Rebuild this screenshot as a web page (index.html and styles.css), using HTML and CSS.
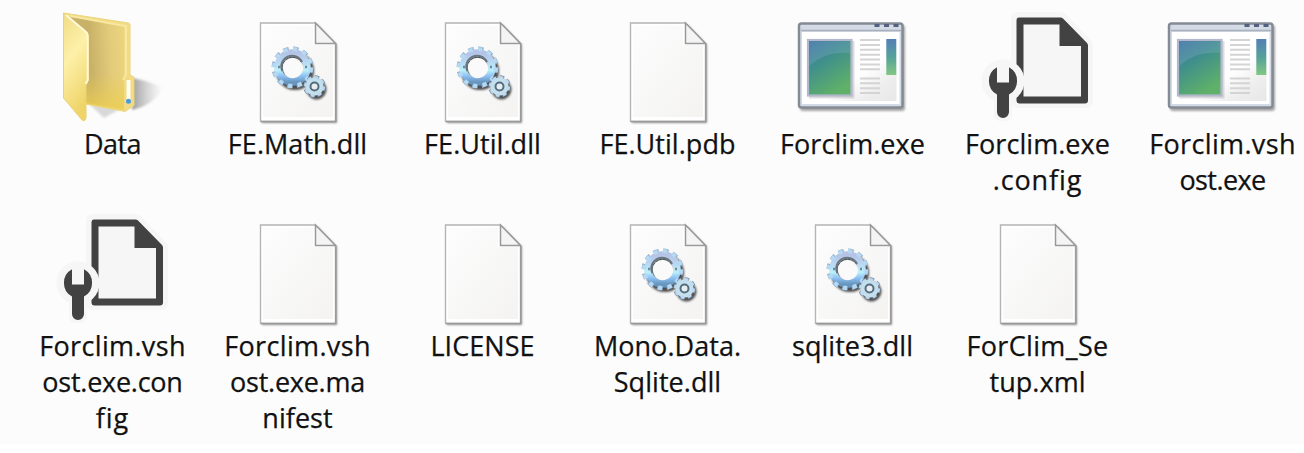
FILE: index.html
```html
<!DOCTYPE html>
<html lang="en">
<head>
<meta charset="utf-8">
<title>Files</title>
<link rel="stylesheet" href="styles.css">
</head>
<body>
<svg class="defs" width="0" height="0" aria-hidden="true">
  <defs>
    <linearGradient id="paper" x1="0" y1="0" x2="1" y2="1"><stop offset="0" stop-color="#fdfdfd"/><stop offset="1" stop-color="#f4f3f2"/></linearGradient>
    <linearGradient id="metal" x1=".5" y1="0" x2=".5" y2="1"><stop offset="0" stop-color="#b4c3e6"/><stop offset=".25" stop-color="#b9d3f1"/><stop offset=".6" stop-color="#baf0fa"/><stop offset=".8" stop-color="#8dbff2"/><stop offset="1" stop-color="#6795bd"/></linearGradient>
    <linearGradient id="screen" x1="0" y1="0" x2=".5" y2="1"><stop offset="0" stop-color="#3c6da5"/><stop offset=".45" stop-color="#40908b"/><stop offset="1" stop-color="#5fb069"/></linearGradient>
    <linearGradient id="strip" x1="0" y1="0" x2="0" y2="1"><stop offset="0" stop-color="#527fb6"/><stop offset=".5" stop-color="#55a19a"/><stop offset="1" stop-color="#82c783"/></linearGradient>
    <linearGradient id="winbody" x1="0" y1="0" x2="1" y2="1"><stop offset=".6" stop-color="#fff"/><stop offset=".8" stop-color="#eeeeee"/><stop offset="1" stop-color="#e7e7e7"/></linearGradient>
    <linearGradient id="flap" x1="0" y1="0" x2=".3" y2="1"><stop offset="0" stop-color="#f1dc86"/><stop offset=".45" stop-color="#fdf0a9"/><stop offset="1" stop-color="#efd469"/></linearGradient>
    <linearGradient id="back" x1="0" y1=".4" x2="1" y2=".3"><stop offset=".38" stop-color="#c8b167"/><stop offset=".75" stop-color="#e2cb7a"/><stop offset="1" stop-color="#ebd47c"/></linearGradient>
    <linearGradient id="glow" x1="0" y1="0" x2="0" y2="1"><stop offset=".4" stop-color="#edce51" stop-opacity="0"/><stop offset="1" stop-color="#edce51" stop-opacity=".85"/></linearGradient>
    <linearGradient id="shade" x1="0" y1="0" x2="1" y2="0"><stop offset="0" stop-color="#777" stop-opacity=".7"/><stop offset="1" stop-color="#aaa" stop-opacity="0"/></linearGradient>
    <filter id="soft" x="-20%" y="-20%" width="150%" height="150%"><feGaussianBlur stdDeviation="1.3"/></filter>
    <filter id="edge"><feGaussianBlur stdDeviation=".55"/></filter>
    <symbol id="page" viewBox="0 0 185 128">
      <path d="M57 25H113L132 45V123H57Z" fill="#777" filter="url(#soft)" opacity=".75"/>
      <g filter="url(#edge)">
        <path d="M55.5 23H110.5L130.5 43.5V121.5H55.5Z" fill="#fff" stroke="#b4b4b4" stroke-width="1.4"/>
        <path d="M58 25.5H108V45H128V117H58Z" fill="url(#paper)"/>
        <path d="M130.8 44V121.6H56" fill="none" stroke="#999" stroke-width="1.5"/>
        <path d="M110.5 23V43.5H130.5Z" fill="#f4f4f4" stroke="#999" stroke-width="1.5"/>
      </g>
    </symbol>
    <symbol id="dll" viewBox="0 0 185 128">
      <use href="#page" width="185" height="128"/>
      <g fill="none" stroke="#333" filter="url(#soft)" opacity=".85">
        <circle cx="90" cy="71" r="15" stroke-width="8"/>
        <circle cx="111.5" cy="89.5" r="7.5" stroke-width="5"/>
      </g>
      <g filter="url(#edge)" fill="none">
        <circle cx="87.5" cy="67.5" r="18.8" stroke="#8faccb" stroke-width="4.2" stroke-dasharray="5.4 4.444"/>
        <circle cx="87.5" cy="67.5" r="14.5" stroke="url(#metal)" stroke-width="7.5"/>
        <circle cx="87.5" cy="67.5" r="18.5" stroke="#b5d9f3" stroke-width="4" stroke-dasharray="4.3 5.387"/>
        <circle cx="87.5" cy="67.5" r="9.8" fill="#fafafa"/>
        <path d="M77.3 71A10.5 10.5 0 1 1 97 62" stroke="#66747e" stroke-width="2"/>
        <path d="M73 67h2M100 67h2" stroke="#718999" stroke-width="2.5"/>
        <circle cx="109.5" cy="86.5" r="9.2" stroke="#718ba5" stroke-width="4" stroke-dasharray="4.2 3.025"/>
        <circle cx="109.5" cy="86.5" r="6.6" stroke="#c4e0ed" stroke-width="5"/>
        <circle cx="109.5" cy="86.5" r="9" stroke="#bfdaef" stroke-width="3" stroke-dasharray="3.4 3.669"/>
        <circle cx="109.5" cy="86.5" r="4" fill="#e8eef0" stroke="#566d80" stroke-width="2"/>
      </g>
    </symbol>
    <symbol id="exe" viewBox="0 0 185 128">
      <rect x="40" y="25" width="105" height="86" rx="3" fill="#777" filter="url(#soft)" opacity=".65"/>
      <g filter="url(#edge)">
        <rect x="39" y="23.5" width="103.5" height="84" rx="2.5" fill="#d3dce6" stroke="#858b94" stroke-width="2.5"/>
        <path d="M41 30.5H141" stroke="#a9b0bb" stroke-width="1.3"/>
        <rect x="42" y="32" width="97.5" height="72" fill="#fff"/>
        <rect x="44" y="34" width="92.5" height="67" fill="url(#winbody)"/>
        <path d="M114.5 25.5h5M124 25.5h5M133.5 25.5h5" stroke="#52617d" stroke-width="3"/>
        <rect x="49" y="41" width="45.5" height="57.5" fill="#aaa" opacity=".4"/>
        <rect x="48" y="40" width="43.5" height="55.5" fill="url(#screen)" stroke="#b2b8cc" stroke-width="2.2"/>
        <path d="M49.5 41.5H90.5V53Q65 51 49.5 66Z" fill="#8fb6d5" opacity=".25"/>
        <path d="M100 40h20M100 45h20M100 49.8h20M100 54.7h20M100 59.5h20M100 64.4h20M100 69.2h20M100 78.5h20M100 83.3h20M100 88.2h20M100 93h20" stroke="#d4d4d4" stroke-width="2"/>
        <rect x="126.3" y="39" width="10" height="36" fill="url(#strip)"/>
      </g>
    </symbol>
    <symbol id="config" viewBox="0 0 185 128">
      <g fill="#f6f6f6" stroke="#f6f6f6" stroke-width="12" stroke-linejoin="round" filter="url(#edge)">
        <path d="M72 18H116L142 45V102H72Z"/>
        <circle cx="58" cy="81" r="15.5"/><path d="M55 90H61V115H55Z"/>
      </g>
      <g filter="url(#edge)">
        <path d="M74 17.5H115.5Q117 17.5 118 18.5L142 43Q143 44 143 45.5V100.5Q143 103.5 140 103.5H74.5Q71.5 103.5 71.5 100.5V20.5Q71.5 17.5 74 17.5ZM78.5 24.5V96.5H136V46H114.5V24.5Z" fill="#424242" fill-rule="evenodd"/>
        <circle cx="58" cy="81" r="21.5" fill="#f6f6f6"/>
        <path d="M52 67.3V82.5H64V67.3A15.5 15.5 0 0 1 64 94.5V112A6 6 0 0 1 52 112V94.5A15.5 15.5 0 0 1 52 67.3Z" fill="#424242"/>
      </g>
    </symbol>
    <symbol id="folder" viewBox="0 0 185 128">
      <path d="M112 78Q130 81 143 88Q134 105 112 110Z" fill="url(#shade)" filter="url(#soft)"/>
      <path d="M66 101L84 118L100 109Z" fill="#999" filter="url(#soft)" opacity=".35"/>
      <g filter="url(#edge)">
        <path d="M43.5 13L108.5 23Q110 23.5 110 25V75L114 77V105.5L105 111.5L66 104V40Z" fill="#f2db83" stroke="#e9d67e"/>
        <path d="M48 16L104 27V109L66 103Z" fill="url(#back)"/>
        <path d="M66 50H104V110L66 104Z" fill="url(#glow)"/>
        <path d="M50 16L106 26V74L103 80" fill="none" stroke="#f7e7a0" stroke-width="2"/>
        <path d="M43.5 13L66 31Q68.5 33 68.5 36V80L66 84V117Q66 122 62 120L43.5 98Z" fill="url(#flap)" stroke="#ead273"/>
        <path d="M46 15L66 32Q67.7 33.5 67.7 36V80L65.7 84" fill="none" stroke="#fff9d5" stroke-width="2"/>
        <path d="M108.5 80V100" stroke="#fffdf0" stroke-width="4"/>
        <circle cx="108.5" cy="101.3" r="2.5" fill="#4a9be0"/>
      </g>
    </symbol>
  </defs>
</svg>
<main class="files">
  <figure class="file"><svg class="icon"><use href="#folder"/></svg><figcaption class="name tight">Data</figcaption></figure>
  <figure class="file"><svg class="icon"><use href="#dll"/></svg><figcaption class="name">FE.Math.dll</figcaption></figure>
  <figure class="file"><svg class="icon"><use href="#dll"/></svg><figcaption class="name">FE.Util.dll</figcaption></figure>
  <figure class="file"><svg class="icon"><use href="#page"/></svg><figcaption class="name">FE.Util.pdb</figcaption></figure>
  <figure class="file"><svg class="icon"><use href="#exe"/></svg><figcaption class="name">Forclim.exe</figcaption></figure>
  <figure class="file"><svg class="icon"><use href="#config"/></svg><figcaption class="name">Forclim.exe<br><span class="wide">.config</span></figcaption></figure>
  <figure class="file"><svg class="icon"><use href="#exe"/></svg><figcaption class="name"><span class="loose">Forclim.vsh</span><br><span class="tight">ost.exe</span></figcaption></figure>
  <figure class="file"><svg class="icon"><use href="#config"/></svg><figcaption class="name"><span class="loose">Forclim.vsh</span><br><span class="snug">ost.exe.con</span><br><span class="wide">fig</span></figcaption></figure>
  <figure class="file"><svg class="icon"><use href="#page"/></svg><figcaption class="name"><span class="loose">Forclim.vsh</span><br><span class="snug">ost.exe.ma</span><br>nifest</figcaption></figure>
  <figure class="file"><svg class="icon"><use href="#page"/></svg><figcaption class="name">LICENSE</figcaption></figure>
  <figure class="file"><svg class="icon"><use href="#dll"/></svg><figcaption class="name">Mono.Data.<br>Sqlite.dll</figcaption></figure>
  <figure class="file"><svg class="icon"><use href="#dll"/></svg><figcaption class="name">sqlite3.dll</figcaption></figure>
  <figure class="file"><svg class="icon"><use href="#page"/></svg><figcaption class="name"><span class="loose">ForClim_Se</span><br>tup.xml</figcaption></figure>
</main>
</body>
</html>
```
FILE: styles.css
```css
body {
  margin: 0;
  background: #fff;
  overflow: hidden;
}

.defs {
  display: block;
}

.files {
  display: grid;
  grid-template-columns: repeat(7, 185px);
  grid-template-rows: 202px 242px;
  box-sizing: border-box;
  width: 1304px;
  height: 444px;
  padding-left: 20px;
  background: #fcfcfc;
}

.file {
  margin: 0;
}

.icon {
  display: block;
  width: 185px;
  height: 128px;
}

.name {
  margin-top: -2px;
  font: 27px/36px "Open Sans", "Noto Sans", sans-serif;
  letter-spacing: 0.05px;
  text-align: center;
  color: #111;
  white-space: nowrap;
  -webkit-text-stroke: 0.25px #111;
}

.tight {
  letter-spacing: -0.6px;
}

.snug {
  letter-spacing: -0.25px;
}

.loose {
  letter-spacing: 0.35px;
}

.wide {
  letter-spacing: 0.9px;
}
```
